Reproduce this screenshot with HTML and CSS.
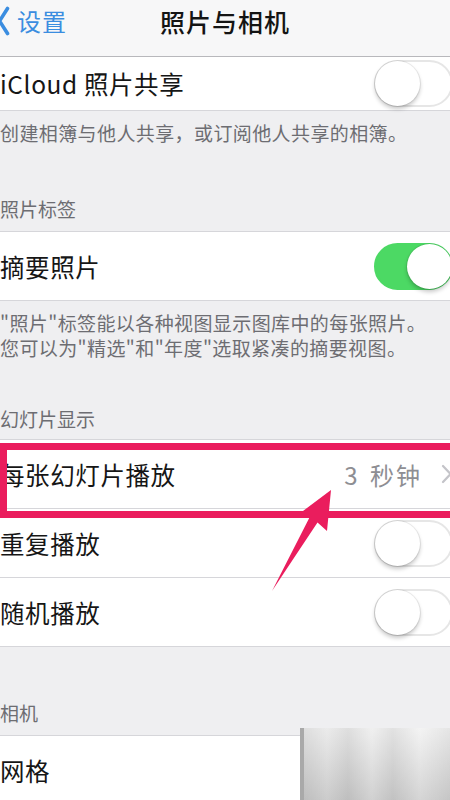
FILE: index.html
```html
<!DOCTYPE html>
<html lang="zh-CN">
<head>
<meta charset="utf-8">
<title>照片与相机</title>
<link rel="stylesheet" href="styles.css">
</head>
<body>
<div class="screen">
  <header class="navbar">
    <div class="back">
      <svg class="back-chevron" width="12" height="32" viewBox="0 0 12 32">
        <path d="M9.5 3.5 L1.5 16 L9.5 28.5" fill="none" stroke="#3b8de0" stroke-width="3.6" stroke-linecap="round" stroke-linejoin="round"/>
      </svg>
      <span class="back-label">设置</span>
    </div>
    <h1 class="title">照片与相机</h1>
  </header>

  <div class="group">
    <div class="row row-short">
      <span class="label">iCloud 照片共享</span>
      <span class="switch"><span class="knob"></span></span>
    </div>
  </div>
  <p class="footer">创建相簿与他人共享，或订阅他人共享的相簿。</p>

  <p class="section">照片标签</p>
  <div class="group">
    <div class="row">
      <span class="label">摘要照片</span>
      <span class="switch on"><span class="knob"></span></span>
    </div>
  </div>
  <p class="footer">"照片"标签能以各种视图显示图库中的每张照片。<br>您可以为"精选"和"年度"选取紧凑的摘要视图。</p>

  <p class="section section-tight">幻灯片显示</p>
  <div class="group">
    <div class="row">
      <span class="label">每张幻灯片播放</span>
      <span class="detail">3 秒钟
        <svg class="chevron" width="11" height="20" viewBox="0 0 11 20">
          <path d="M2 2 L9.5 10 L2 18" fill="none" stroke="#c4c4c9" stroke-width="2.2" stroke-linecap="round" stroke-linejoin="round"/>
        </svg>
      </span>
    </div>
    <div class="row">
      <span class="label">重复播放</span>
      <span class="switch"><span class="knob"></span></span>
    </div>
    <div class="row">
      <span class="label">随机播放</span>
      <span class="switch"><span class="knob"></span></span>
    </div>
  </div>

  <p class="section section-wide">相机</p>
  <div class="group">
    <div class="row">
      <span class="label">网格</span>
    </div>
  </div>

  <!-- annotation: frame round the slideshow row and the pointing arrow -->
  <div class="highlight"></div>
  <svg class="arrow" width="450" height="800" viewBox="0 0 450 800">
    <polygon points="331,490 327,531 317.5,522.5 272,591 309.5,517.5 299,514" fill="#ea1d5d"/>
  </svg>

  <div class="watermark"></div>
</div>
</body>
</html>
```

FILE: styles.css
```css
* {
  box-sizing: border-box;
}

html, body {
  margin: 0;
  padding: 0;
}

body {
  width: 450px;
  height: 800px;
  overflow: hidden;
  background: #efeff1;
  font-family: "Noto Sans CJK SC", "Noto Sans", sans-serif;
  color: #1c1c1c;
}

.screen {
  position: relative;
  width: 450px;
  height: 800px;
  overflow: hidden;
}

/* navigation bar */
.navbar {
  height: 57px;
  background: #f7f7f8;
  border-bottom: 1px solid #b8b8bc;
  display: flex;
  align-items: flex-start;
  justify-content: center;
  padding-top: 5px;
  position: relative;
}

.back {
  position: absolute;
  left: -2px;
  top: 5px;
  display: flex;
  align-items: center;
  gap: 7px;
}

.back-label {
  font-size: 24px;
  line-height: 32px;
  color: #3b8de0;
  letter-spacing: 1px;
}

.title {
  margin: 0;
  font-size: 25px;
  font-weight: 500;
  line-height: 32px;
  color: #141414;
  letter-spacing: 1px;
}

/* grouped table */
.group {
  background: #fff;
  border-top: 1px solid #d6d6da;
}

.row {
  height: 69px;
  display: flex;
  align-items: center;
  justify-content: space-between;
  border-bottom: 1px solid #d6d6da;
}

.row-short {
  height: 54px;
}

.group:first-of-type {
  border-top: none;
}

.label {
  font-size: 24.5px;
  letter-spacing: 0.6px;
  color: #161616;
  white-space: nowrap;
}

.detail {
  display: flex;
  align-items: center;
  gap: 19px;
  font-size: 24px;
  color: #8e8e93;
  letter-spacing: 2px;
  word-spacing: 3px;
  margin-right: -2px;
}

.chevron {
  display: block;
}

/* switches */
.switch {
  position: relative;
  width: 79px;
  height: 47px;
  border-radius: 24px;
  background: #fff;
  border: 2px solid #e6e6e6;
  margin-right: -3px;
  flex: none;
}

.switch .knob {
  position: absolute;
  top: -1px;
  left: -1px;
  width: 45px;
  height: 45px;
  border-radius: 50%;
  background: #fff;
  box-shadow: 0 3px 4px rgba(0, 0, 0, 0.22), 0 0 0 1px rgba(0, 0, 0, 0.07);
}

.switch.on {
  background: #4cd964;
  border-color: #4cd964;
}

.switch.on .knob {
  left: auto;
  right: -1px;
}

/* footers and section headers */
.footer {
  margin: 0;
  padding-top: 9px;
  font-size: 19px;
  line-height: 25px;
  color: #6d6d72;
  letter-spacing: 0.4px;
  white-space: nowrap;
}

.section {
  margin: 52px 0 0;
  padding-bottom: 10px;
  font-size: 19px;
  line-height: 24px;
  color: #6d6d72;
}

.section-tight {
  margin-top: 47px;
  padding-bottom: 8px;
}

.section-wide {
  margin-top: 54px;
}

/* annotation overlay */
.highlight {
  position: absolute;
  left: 0;
  top: 443px;
  width: 460px;
  height: 75px;
  border: 7px solid #ea1d5d;
}

.arrow {
  position: absolute;
  left: 0;
  top: 0;
  pointer-events: none;
}

.watermark {
  position: absolute;
  left: 300px;
  top: 728px;
  width: 150px;
  height: 72px;
  background:
    linear-gradient(90deg, #a9a9a9 0 4px, transparent 4px),
    linear-gradient(180deg, rgba(255,255,255,0.4), rgba(170,170,170,0.35)),
    linear-gradient(90deg, #c4c4c4 0%, #dedede 18%, #c9c9c9 32%, #e6e6e6 48%, #cecece 62%, #ececec 80%, #d4d4d4 100%);
  filter: blur(0.6px);
}
```
